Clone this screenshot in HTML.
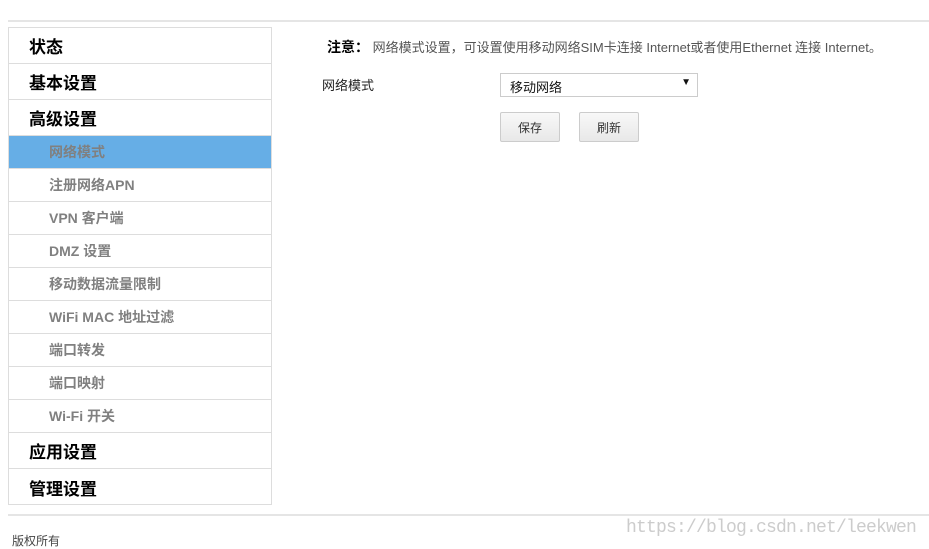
<!DOCTYPE html>
<html><head><meta charset="utf-8"><style>
*{margin:0;padding:0;box-sizing:border-box}
body{width:929px;height:547px;background:#fff;position:relative;overflow:hidden;font-family:"Liberation Sans","Noto Sans CJK SC",sans-serif}
.hl{position:absolute;height:2px;background:#e5e5e5}
.side{position:absolute;left:8px;top:27px;width:264px;height:478px;border:1px solid #ddd}
.it{position:absolute;left:0;width:262px;border-bottom:1px solid #ddd;display:flex;align-items:center}
.h{height:36px;font-size:17px;font-weight:bold;color:#000;padding-left:20px}
.s{height:33px;font-size:14px;font-weight:bold;color:#808080;padding-left:40px}
.act{background:#66aee6}
.t{position:absolute;white-space:nowrap}
.btn{position:absolute;top:112px;width:60px;height:30px;border:1px solid #ccc;border-radius:2px;background:linear-gradient(#f8f8f8,#e8e8e8);font-size:12px;color:#333;display:flex;align-items:center;justify-content:center}
</style></head><body>
<div class="hl" style="left:8px;top:20px;width:921px"></div>
<div class="side">
<div class="it h" style="top:0">状态</div>
<div class="it h" style="top:36px">基本设置</div>
<div class="it h" style="top:72px">高级设置</div>
<div class="it s act" style="top:108px">网络模式</div>
<div class="it s" style="top:141px">注册网络APN</div>
<div class="it s" style="top:174px">VPN 客户端</div>
<div class="it s" style="top:207px">DMZ 设置</div>
<div class="it s" style="top:240px">移动数据流量限制</div>
<div class="it s" style="top:273px">WiFi MAC 地址过滤</div>
<div class="it s" style="top:306px">端口转发</div>
<div class="it s" style="top:339px">端口映射</div>
<div class="it s" style="top:372px">Wi-Fi 开关</div>
<div class="it h" style="top:405px">应用设置</div>
<div class="it h" style="top:441px;border-bottom:none">管理设置</div>
</div>
<div class="t" style="left:327px;top:37px;font-size:13px;color:#555"><b style="color:#000;font-size:14px">注意：</b> 网络模式设置，可设置使用移动网络SIM卡连接 Internet或者使用Ethernet 连接 Internet。</div>
<div class="t" style="left:322px;top:75px;font-size:13px;color:#222">网络模式</div>
<div style="position:absolute;left:500px;top:73px;width:198px;height:24px;border:1px solid #ccc;font-size:13px;color:#111;padding:3px 0 0 9px">移动网络<span style="position:absolute;right:6px;top:3px;font-size:10px">▼</span></div>
<div class="btn" style="left:500px">保存</div>
<div class="btn" style="left:579px">刷新</div>
<div class="hl" style="left:8px;top:514px;width:921px"></div>
<div class="t" style="left:12px;top:532px;font-size:12px;color:#444">版权所有</div>
<div class="t" style="left:626px;top:518px;font-size:18px;color:#ccc;font-family:'Liberation Mono',monospace;letter-spacing:-0.8px">https://blog.csdn.net/leekwen</div>
</body></html>
